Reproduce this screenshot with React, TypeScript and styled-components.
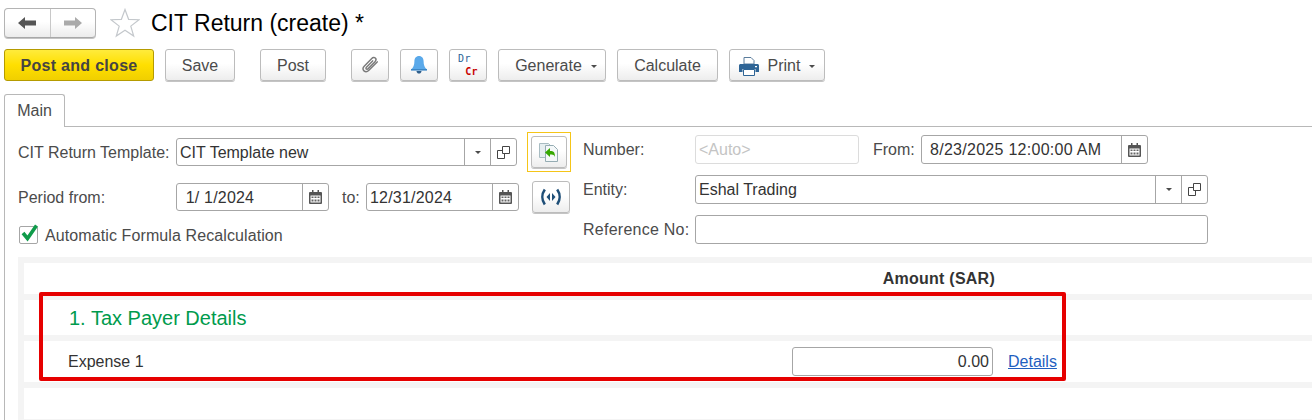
import styled, { createGlobalStyle } from "styled-components";

const GlobalStyle = createGlobalStyle`
  html, body {
    margin: 0;
    padding: 0;
    background: #fff;
    overflow: hidden;
  }
  body {
    font-family: "Liberation Sans", Arial, sans-serif;
    font-size: 16px;
    color: #4b4b4b;
  }
`;

const Page = styled.div`
  position: relative;
  width: 1312px;
  height: 420px;
  overflow: hidden;
`;

const TitleBar = styled.div`
  display: flex;
  align-items: center;
  height: 30px;
  padding: 8px 0 0 4px;
`;

const NavGroup = styled.div`
  display: flex;
  width: 92px;
  height: 30px;
  box-sizing: border-box;
  border: 1px solid #b4b4b4;
  border-bottom-color: #a8a8a8;
  border-radius: 4px;
  background: linear-gradient(#ffffff, #ffffff 45%, #ececec);
  box-shadow: 0 1px 0 #c4c4c4;
`;

const NavCell = styled.div<{ $divided?: boolean }>`
  flex: 1;
  display: flex;
  align-items: center;
  justify-content: center;
  border-left: ${(p) => (p.$divided ? "1px solid #c8c8c8" : "none")};
`;

const StarSlot = styled.div`
  display: flex;
  margin: 0 11px 0 14px;
`;

const Title = styled.h1`
  margin: 0;
  font-size: 23px;
  font-weight: 400;
  color: #000;
  white-space: nowrap;
`;

const CommandBar = styled.div`
  display: flex;
  align-items: flex-start;
  height: 33px;
  padding: 11px 0 0 4px;
`;

const Button = styled.button<{ $w: number; $ml?: number }>`
  display: flex;
  align-items: center;
  justify-content: center;
  gap: 9px;
  box-sizing: border-box;
  flex: none;
  width: ${(p) => p.$w}px;
  height: 32px;
  margin: 0 0 0 ${(p) => p.$ml ?? 0}px;
  padding: 2px 0 0;
  border: 1px solid #bcbcbc;
  border-radius: 3px;
  background: linear-gradient(#ffffff, #ffffff 45%, #ededed);
  box-shadow: 0 1px 0 #c4c4c4;
  font-family: inherit;
  font-size: 16px;
  color: #4b4b4b;
`;

const PrimaryButton = styled(Button)`
  border-color: #b59b00;
  background: linear-gradient(#ffeb3c, #ffdf00 50%, #f0cf00);
  box-shadow: none;
  font-weight: 700;
  letter-spacing: 0.3px;
  color: #444;
`;

const MenuButton = styled(Button)`
  padding-left: 8px;
`;

const IconButton = styled(Button)`
  padding: 0;
`;

const DrCr = styled.span`
  display: grid;
  width: 20px;
  font-family: "DejaVu Sans Mono", monospace;
  font-size: 10px;
  line-height: 13px;
  letter-spacing: 0.4px;
`;

const Dr = styled.span`
  justify-self: start;
  color: #2a6496;
`;

const Cr = styled.span`
  justify-self: end;
  font-weight: 700;
  color: #c80000;
`;

const Caret = styled.i`
  display: inline-block;
  width: 0;
  height: 0;
  border-left: 3px solid transparent;
  border-right: 3px solid transparent;
  border-top: 3px solid #4b4b4b;
`;

const TabStrip = styled.div`
  display: flex;
  height: 33px;
  margin-top: 12px;
  padding-left: 4px;
`;

const Tab = styled.div`
  width: 61px;
  height: 33px;
  box-sizing: border-box;
  border: 1px solid #b8b8b8;
  border-bottom: none;
  border-radius: 3px 3px 0 0;
  background: #fff;
  color: #4b4b4b;
  line-height: 32px;
  text-align: center;
  position: relative;
  z-index: 1;
`;

const Panel = styled.div`
  height: 294px;
  margin: -1px 0 0 4px;
  border-top: 1px solid #b8b8b8;
  border-left: 1px solid #b8b8b8;
`;

const FormArea = styled.div`
  display: flex;
  height: 130px;
  padding-left: 13px;
`;

const Label = styled.span<{ $w?: number; $ml?: number; $pl?: number; $ls?: number }>`
  flex: none;
  box-sizing: border-box;
  width: ${(p) => (p.$w ? `${p.$w}px` : "auto")};
  margin-left: ${(p) => p.$ml ?? 0}px;
  padding-left: ${(p) => p.$pl ?? 0}px;
  letter-spacing: ${(p) => p.$ls ?? 0}px;
  white-space: nowrap;
  color: #4b4b4b;
`;

const LeftColumn = styled.div`
  width: 565px;
  flex: none;
  display: flex;
  flex-direction: column;

  ${Label} {
    padding-top: 2px;
  }
`;

const RightColumn = styled.div`
  display: flex;
  flex-direction: column;
  gap: 11px;
  padding-top: 8px;
`;

const FormRow = styled.div<{ $h: number; $mt?: number }>`
  display: flex;
  align-items: center;
  height: ${(p) => p.$h}px;
  margin-top: ${(p) => p.$mt ?? 0}px;
`;

const Field = styled.div<{ $w: number; $h?: number; $disabled?: boolean }>`
  display: flex;
  flex: none;
  box-sizing: border-box;
  width: ${(p) => p.$w}px;
  height: ${(p) => p.$h ?? 29}px;
  border: 1px solid ${(p) => (p.$disabled ? "#dcdcdc" : "#a6a6a6")};
  border-radius: 3px;
  background: #fff;
  overflow: hidden;
`;

const FieldText = styled.span<{ $pad?: number; $muted?: boolean; $right?: boolean; $ls?: number }>`
  flex: 1;
  padding: 0 ${(p) => (p.$right ? 3 : 0)}px 0 ${(p) => p.$pad ?? 3}px;
  line-height: 28px;
  letter-spacing: ${(p) => p.$ls ?? 0}px;
  white-space: pre;
  text-align: ${(p) => (p.$right ? "right" : "left")};
  color: ${(p) => (p.$muted ? "#c4c4c4" : "#333")};
`;

const FieldAddon = styled.span<{ $w: number }>`
  flex: none;
  box-sizing: border-box;
  display: flex;
  align-items: center;
  justify-content: center;
  width: ${(p) => p.$w}px;
  border-left: 1px solid #a6a6a6;
`;

const Highlight = styled.div`
  display: flex;
  align-items: center;
  justify-content: center;
  box-sizing: border-box;
  width: 44px;
  height: 40px;
  margin-left: 10px;
  border: 1px solid #f5c518;
`;

const CheckBox = styled.span`
  position: relative;
  flex: none;
  box-sizing: border-box;
  width: 19px;
  height: 18px;
  margin: 1px 7px 0 1px;
  border: 1px solid #a6a6a6;
  border-radius: 2px;
`;

const CheckMark = styled.svg`
  position: absolute;
  left: 1px;
  top: -3px;
`;

const Sheet = styled.div`
  display: flex;
  flex-direction: column;
  gap: 6px;
  height: 167px;
  margin-left: 13px;
  padding: 6px 0 0 6px;
  background: #f4f4f4;
`;

const SheetRow = styled.div<{ $h: number }>`
  display: flex;
  align-items: center;
  flex: none;
  height: ${(p) => p.$h}px;
  background: #fff;
`;

const AmountHead = styled.div`
  width: 971px;
  text-align: right;
  font-weight: 700;
  letter-spacing: 0.25px;
  color: #333;
`;

const SectionTitle = styled.div`
  padding: 1px 0 0 45px;
  font-size: 20px;
  color: #009b4d;
`;

const RowName = styled.div`
  width: 768px;
  flex: none;
  padding-left: 44px;
  box-sizing: border-box;
  color: #333;
`;

const DetailsLink = styled.a`
  margin-left: 15px;
  color: #1f5fbf;
  text-decoration: underline;
`;

// the red annotation drawn on top of the sheet
const RedFrame = styled.div`
  position: absolute;
  left: 39px;
  top: 292px;
  width: 1027px;
  height: 89px;
  box-sizing: border-box;
  border: 4px solid #e60000;
  border-radius: 2px;
  pointer-events: none;
`;

const ArrowLeft = ({ color }: { color: string }) => (
  <svg width="18" height="12" viewBox="0 0 18 12">
    <path d="M0 6 7 0v3.5h11v5H7V12z" fill={color} />
  </svg>
);

const ArrowRight = ({ color }: { color: string }) => (
  <svg width="18" height="12" viewBox="0 0 18 12">
    <path d="M18 6 11 0v3.5H0v5h11V12z" fill={color} />
  </svg>
);

const Star = () => (
  <svg width="30" height="30" viewBox="0 0 30 30">
    <path
      d="M15 1.5l3.6 9.8 10.4.4-8.2 6.4 2.9 10-8.7-5.8-8.7 5.8 2.9-10L1 11.7l10.4-.4z"
      fill="#fff"
      stroke="#c4c8cc"
      strokeWidth="1.2"
    />
  </svg>
);

const Paperclip = () => (
  <svg width="20" height="20" viewBox="0 0 18 18" fill="none">
    <path
      d="M15.5 6.2 8 13.8c-1.4 1.4-3.2 1.6-4.4.5-1.2-1.2-1-3 .4-4.4l6.6-6.8c1-1 2.4-1.2 3.2-.3.9.9.7 2.2-.3 3.2l-6.3 6.4c-.5.5-1.2.6-1.6.2-.4-.4-.3-1.1.2-1.6l5.6-5.7"
      stroke="#7a7a7a"
      strokeWidth="1.3"
      strokeLinecap="round"
    />
  </svg>
);

const Bell = () => (
  <svg width="18" height="20" viewBox="0 0 18 20">
    <path d="M9 1c3 0 4.6 2.3 4.6 5.2 0 3.6.9 6.4 3.4 8.3H1c2.5-1.9 3.4-4.7 3.4-8.3C4.4 3.3 6 1 9 1z" fill="#5aa9ea" />
    <path d="M1 14h16v1.6H1z" fill="#3b86c6" />
    <path d="M6.5 16h5c0 1.5-1 2.6-2.5 2.6S6.5 17.5 6.5 16z" fill="#2f5f8c" />
  </svg>
);

const Printer = () => (
  <svg width="20" height="19" viewBox="0 0 20 19">
    <path d="M5 .5h7l3 3V7H5z" fill="#fff" stroke="#5b7d9c" />
    <path d="M1.5 7h17c.8 0 1.5.7 1.5 1.5V15h-3.5v-3h-13v3H0V8.5C0 7.7.7 7 1.5 7z" fill="#2f6596" />
    <path d="M4.5 12.5h11v6h-11z" fill="#fff" stroke="#2f6596" />
    <path d="M16 9h2v1.2h-2z" fill="#fff" />
  </svg>
);

const OpenIcon = () => (
  <svg width="13" height="13" viewBox="0 0 13 13" fill="none" stroke="#444">
    <path d="M5.5.5h7v7h-7z" />
    <path d="M5.5 4.5H.5v8h7V8" />
  </svg>
);

const CalendarIcon = () => (
  <svg width="13" height="14" viewBox="0 0 13 14">
    <path d="M1 2h11a1 1 0 0 1 1 1v10a1 1 0 0 1-1 1H1a1 1 0 0 1-1-1V3a1 1 0 0 1 1-1z" fill="#555" />
    <path d="M3 0h1.5v3H3zM8.5 0H10v3H8.5z" fill="#555" />
    <path d="M1.500 5.500h10v7h-10z" fill="#fff" />
    <path
      d="M2.500 6.500h2v1.500h-2zM5.500 6.500h2v1.500h-2zM8.500 6.500h2v1.500h-2zM2.500 9.500h2v2h-2zM5.500 9.500h2v2h-2zM8.500 9.500h2v2h-2z"
      fill="#666"
    />
  </svg>
);

const ApplyTemplateIcon = () => (
  <svg width="20" height="20" viewBox="0 0 20 20">
    <path d="M.5 1.500h9l4 4v10H.5z" fill="#e6eef0" stroke="#a8bcc2" />
    <path d="M6.500 3.500h8l4 4v12h-12z" fill="#f4f8f9" stroke="#95acb3" />
    <path d="M6 10.500 11 6v3h1.500c2.500 0 3.500 2 3.500 6-.8-1.800-1.800-2.500-3.500-2.500H11V15z" fill="#35a800" />
  </svg>
);

const SignalIcon = () => (
  <svg width="20" height="18" viewBox="0 0 20 18" fill="none">
    <path d="M3.800 1.500C.6 6 .6 12 3.800 16.500M16.200 1.500C19.400 6 19.400 12 16.200 16.500" stroke="#1f4f78" strokeWidth="2.600" />
    <path d="M9 5v8L5.500 9zM11 5v8l3.500-4z" fill="#1f4f78" />
  </svg>
);

const Check = () => (
  <CheckMark width="17" height="18" viewBox="0 0 17 18">
    <path d="M2 9l4.500 5.500L15.500 1.500" fill="none" stroke="#0f9b4a" strokeWidth="3.600" />
  </CheckMark>
);

const ChoiceField = ({ w, text }: { w: number; text: string }) => (
  <Field $w={w} $h={w > 400 ? 29 : 28}>
    <FieldText>{text}</FieldText>
    <FieldAddon $w={26}>
      <Caret />
    </FieldAddon>
    <FieldAddon $w={26}>
      <OpenIcon />
    </FieldAddon>
  </Field>
);

const DateField = ({ w, text, pad }: { w: number; text: string; pad?: number }) => (
  <Field $w={w} $h={28}>
    <FieldText $pad={pad} $ls={0.2}>{text}</FieldText>
    <FieldAddon $w={26}>
      <CalendarIcon />
    </FieldAddon>
  </Field>
);

export default function App() {
  return (
    <Page>
      <GlobalStyle />
      <TitleBar>
        <NavGroup>
          <NavCell>
            <ArrowLeft color="#555" />
          </NavCell>
          <NavCell $divided>
            <ArrowRight color="#aaa" />
          </NavCell>
        </NavGroup>
        <StarSlot>
          <Star />
        </StarSlot>
        <Title>CIT Return (create) *</Title>
      </TitleBar>

      <CommandBar>
        <PrimaryButton $w={150}>Post and close</PrimaryButton>
        <Button $w={70} $ml={11}>Save</Button>
        <Button $w={66} $ml={25}>Post</Button>
        <IconButton $w={38} $ml={25}>
          <Paperclip />
        </IconButton>
        <IconButton $w={38} $ml={11}>
          <Bell />
        </IconButton>
        <IconButton $w={38} $ml={11}>
          <DrCr>
            <Dr>Dr</Dr>
            <Cr>Cr</Cr>
          </DrCr>
        </IconButton>
        <MenuButton $w={108} $ml={11}>
          Generate
          <Caret />
        </MenuButton>
        <Button $w={101} $ml={11}>Calculate</Button>
        <Button $w={96} $ml={11}>
          <Printer />
          Print
          <Caret />
        </Button>
      </CommandBar>

      <TabStrip>
        <Tab>Main</Tab>
      </TabStrip>

      <Panel>
        <FormArea>
          <LeftColumn>
            <FormRow $h={40} $mt={5}>
              <Label $w={158}>CIT Return Template:</Label>
              <ChoiceField w={341} text="CIT Template new" />
              <Highlight>
                <IconButton $w={36}>
                  <ApplyTemplateIcon />
                </IconButton>
              </Highlight>
            </FormRow>
            <FormRow $h={33} $mt={8}>
              <Label $w={158}>Period from:</Label>
              <DateField w={153} text=" 1/ 1/2024" pad={4} />
              <Label $w={37} $pl={13}>to:</Label>
              <DateField w={153} text="12/31/2024" />
              <IconButton $w={38} $ml={13}>
                <SignalIcon />
              </IconButton>
            </FormRow>
            <FormRow $h={19} $mt={12}>
              <CheckBox>
                <Check />
              </CheckBox>
              <Label $ls={0.1}>Automatic Formula Recalculation</Label>
            </FormRow>
          </LeftColumn>
          <RightColumn>
            <FormRow $h={29}>
              <Label $w={112}>Number:</Label>
              <Field $w={164} $disabled>
                <FieldText $muted>&lt;Auto&gt;</FieldText>
              </Field>
              <Label $w={48} $ml={14}>From:</Label>
              <Field $w={227}>
                <FieldText $pad={8} $ls={0.28}>8/23/2025 12:00:00 AM</FieldText>
                <FieldAddon $w={26}>
                  <CalendarIcon />
                </FieldAddon>
              </Field>
            </FormRow>
            <FormRow $h={29}>
              <Label $w={112}>Entity:</Label>
              <ChoiceField w={513} text="Eshal Trading" />
            </FormRow>
            <FormRow $h={29}>
              <Label $w={112} $ls={0.25}>Reference No:</Label>
              <Field $w={513} />
            </FormRow>
          </RightColumn>
        </FormArea>

        <Sheet>
          <SheetRow $h={31}>
            <AmountHead>Amount (SAR)</AmountHead>
          </SheetRow>
          <SheetRow $h={35}>
            <SectionTitle>1. Tax Payer Details</SectionTitle>
          </SheetRow>
          <SheetRow $h={41}>
            <RowName>Expense 1</RowName>
            <Field $w={201}>
              <FieldText $right>0.00</FieldText>
            </Field>
            <DetailsLink>Details</DetailsLink>
          </SheetRow>
          <SheetRow $h={31} />
        </Sheet>
      </Panel>

      <RedFrame />
    </Page>
  );
}
